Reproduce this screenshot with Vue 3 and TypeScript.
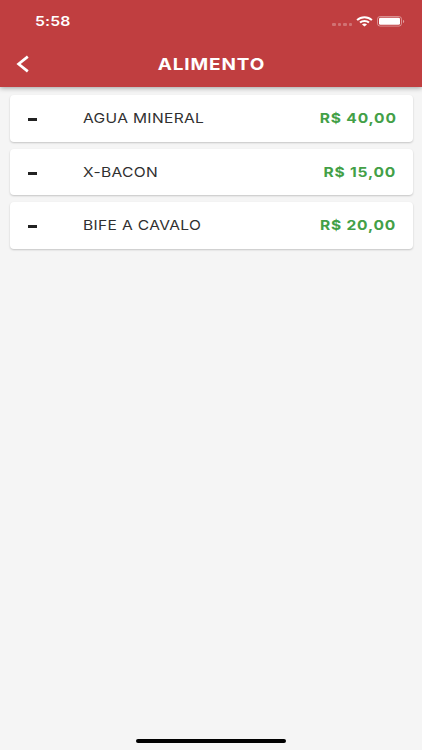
<script setup lang="ts">
interface Item {
  name: string
  price: string
}

const items: Item[] = [
  { name: 'AGUA MINERAL', price: 'R$ 40,00' },
  { name: 'X-BACON', price: 'R$ 15,00' },
  { name: 'BIFE A CAVALO', price: 'R$ 20,00' },
]
</script>

<template>
  <div class="screen">
    <header class="header">
      <div class="status">
        <span class="time">5:58</span>
        <div class="indicators">
          <span class="dots"><i v-for="n in 4" :key="n" /></span>
          <svg class="wifi" width="17" height="11" viewBox="0 0 17 11" fill="none" stroke="#fff" stroke-width="2">
            <path d="M1.1 4.1C5.2 .2 11.8 .2 15.9 4.1" />
            <path d="M4 6.6C6.5 4.3 10.5 4.3 13 6.6" />
            <path d="M8.5 10.6L6 8.5C7.4 7.3 9.6 7.3 11 8.5Z" fill="#fff" stroke="none" />
          </svg>
          <svg class="battery" width="28" height="11" viewBox="0 0 28 11">
            <rect x=".5" y=".5" width="24" height="9.6" rx="2.6" fill="none" stroke="#fff" stroke-opacity=".42" />
            <rect x="2" y="1.8" width="21" height="7" rx="1.4" fill="#fff" />
            <path d="M26 3.7C27.6 4.3 27.6 6.5 26 7.1Z" fill="#fff" fill-opacity=".5" />
          </svg>
        </div>
      </div>
      <div class="bar">
        <button class="back" aria-label="Voltar">
          <svg width="13" height="18" viewBox="0 0 13 18" fill="none" stroke="#fff" stroke-width="2.7">
            <path d="M11.8 1.6L2.6 9L11.8 16.4" />
          </svg>
        </button>
        <h1 class="title">ALIMENTO</h1>
        <span />
      </div>
    </header>
    <main class="list">
      <article v-for="item in items" :key="item.name" class="card">
        <span class="dash" />
        <span class="name">{{ item.name }}</span>
        <span class="price">{{ item.price }}</span>
      </article>
    </main>
    <footer class="home"><span class="pill" /></footer>
  </div>
</template>

<style>
body {
  margin: 0;
  background: #f5f5f5;
}
</style>

<style scoped>
.screen {
  width: 422px;
  height: 750px;
  display: flex;
  flex-direction: column;
  overflow: hidden;
  background: #f5f5f5;
  font-family: Inter, 'Liberation Sans', sans-serif;
}
.header {
  height: 87px;
  box-sizing: border-box;
  flex: none;
  background: #c03e40;
  color: #fff;
  box-shadow: 0 1px 5px rgba(0, 0, 0, 0.36);
}
.status {
  height: 42px;
  box-sizing: border-box;
  padding: 0 17px 0 35px;
  display: flex;
  align-items: center;
  justify-content: space-between;
}
.time {
  font-size: 13.5px;
  font-weight: 600;
  line-height: 20px;
  letter-spacing: 0.1px;
  transform: scaleX(1.17);
  transform-origin: left;
}
.indicators {
  display: flex;
  align-items: center;
}
.dots {
  display: flex;
  gap: 2px;
  margin: 6px 4px 0 0;
}
.dots i {
  width: 3.4px;
  height: 3px;
  border-radius: 1px;
  background: rgba(255, 255, 255, 0.27);
}
.wifi {
  margin-right: 4px;
}
.bar {
  height: 43px;
  display: grid;
  grid-template-columns: 60px 1fr 60px;
  align-items: center;
}
.back {
  display: flex;
  padding: 0 0 0 16px;
  border: 0;
  background: none;
}
.title {
  margin: 0;
  text-align: center;
  font-size: 16.2px;
  font-weight: 700;
  line-height: 24px;
  letter-spacing: 0.75px;
  text-indent: 0.7px;
  transform: scaleX(1.17);
}
.list {
  flex: 1;
  padding: 8px 9.5px 0 9.5px;
  display: flex;
  flex-direction: column;
  gap: 7px;
}
.card {
  height: 46.5px;
  box-sizing: border-box;
  padding: 0 16px 0 18px;
  display: flex;
  align-items: center;
  border-radius: 4px;
  background: #fff;
  box-shadow: 0 1px 2px rgba(0, 0, 0, 0.2);
}
.dash {
  width: 9px;
  height: 3px;
  margin: 3px 46.5px 0 0;
  background: #222;
}
.name {
  flex: 1;
  font-size: 13.3px;
  letter-spacing: 0.3px;
  color: #303030;
  transform: scaleX(1.17);
  transform-origin: left;
}
.price {
  font-size: 13.3px;
  font-weight: 700;
  letter-spacing: 0.7px;
  color: #43a047;
  transform: scaleX(1.17);
  transform-origin: right;
}
.home {
  height: 11.5px;
  flex: none;
  display: flex;
  justify-content: center;
}
.pill {
  width: 150px;
  height: 4px;
  border-radius: 2px;
  background: #000;
}
</style>
